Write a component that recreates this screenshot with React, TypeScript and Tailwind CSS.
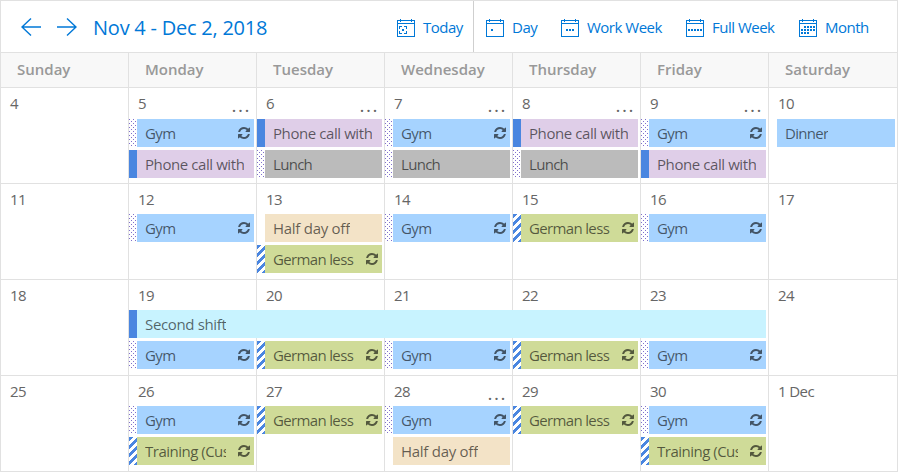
import type { ReactNode } from "react";

type Marker = "dots" | "solid" | "stripes" | "none";
type Entry = { title: string; marker: Marker; color: string; repeat?: boolean; span?: boolean; tracking?: string };
type Day = { label: string; more?: boolean; entries?: (Entry | null)[] };

const gym: Entry = { title: "Gym", marker: "dots", color: "bg-[#a6d3ff]", repeat: true, tracking: "tracking-[-0.6px]" };
const call: Entry = { title: "Phone call with", marker: "solid", color: "bg-[#dfcee8]", tracking: "tracking-[-0.42px]" };
const lunch: Entry = { title: "Lunch", marker: "dots", color: "bg-[#bbbbbb]", tracking: "tracking-[-0.7px]" };
const german: Entry = { title: "German less", marker: "stripes", color: "bg-[#cfdb98]", repeat: true, tracking: "tracking-[-0.65px]" };
const half: Entry = { title: "Half day off", marker: "none", color: "bg-[#f3e3c7]", tracking: "tracking-[-0.27px]" };
const training: Entry = { title: "Training (Custom)", marker: "stripes", color: "bg-[#cfdb98]", repeat: true, tracking: "tracking-[-0.5px]" };
const dinner: Entry = { title: "Dinner", marker: "none", color: "bg-[#a6d3ff]", tracking: "tracking-[-0.7px]" };
const shift: Entry = { title: "Second shift", marker: "solid", color: "bg-[#c8f3ff]", span: true, tracking: "tracking-[-0.35px]" };

const weeks: Day[][] = [
  [
    { label: "4" },
    { label: "5", more: true, entries: [gym, call] },
    { label: "6", more: true, entries: [call, lunch] },
    { label: "7", more: true, entries: [gym, lunch] },
    { label: "8", more: true, entries: [call, lunch] },
    { label: "9", more: true, entries: [gym, call] },
    { label: "10", entries: [dinner] },
  ],
  [
    { label: "11" },
    { label: "12", entries: [gym] },
    { label: "13", entries: [half, german] },
    { label: "14", entries: [gym] },
    { label: "15", entries: [german] },
    { label: "16", entries: [gym] },
    { label: "17" },
  ],
  [
    { label: "18" },
    { label: "19", entries: [shift, gym] },
    { label: "20", entries: [null, german] },
    { label: "21", entries: [null, gym] },
    { label: "22", entries: [null, german] },
    { label: "23", entries: [null, gym] },
    { label: "24" },
  ],
  [
    { label: "25" },
    { label: "26", entries: [gym, training] },
    { label: "27", entries: [german] },
    { label: "28", more: true, entries: [gym, half] },
    { label: "29", entries: [german] },
    { label: "30", entries: [gym, training] },
    { label: "1 Dec" },
  ],
];

const markers: Record<Marker, string> = {
  dots: "bg-[conic-gradient(from_270deg_at_1px_1px,#8070cc_90deg,transparent_0),conic-gradient(from_270deg_at_1px_1px,#8070cc_90deg,transparent_0)] bg-[length:4px_4px] bg-[position:0_0,2px_2px]",
  solid: "bg-[#4a86e0]",
  stripes: "bg-[repeating-linear-gradient(135deg,#4a86e0_0px,#4a86e0_3px,#ffffff_3px,#ffffff_5.657px)]",
  none: "",
};

function RepeatIcon() {
  return (
    <svg className="ml-3 shrink-0" width="12" height="12" viewBox="0 128 1536 1536" fill="currentColor">
      <path d="M1511 1056q0 5-1 7-64 268-268 434.500t-478 166.500q-146 0-282.500-55t-243.500-157l-129 129q-19 19-45 19t-45-19-19-45v-448q0-26 19-45t45-19h448q26 0 45 19t19 45-19 45l-137 137q71 66 161 102t187 36q134 0 250-65t186-179q11-17 53-117 8-23 30-23h192q13 0 22.500 9.500t9.500 22.500zM1536 256v448q0 26-19 45t-45 19h-448q-26 0-45-19t-19-45 19-45l138-138q-148-137-349-137-134 0-250 65t-186 179q-11 17-53 117-8 23-30 23h-199q-13 0-22.500-9.500t-9.500-22.500v-7q65-268 270-434.500t480-166.500q146 0 284 55.500t245 156.500l130-129q19-19 45-19t45 19 19 45z" />
    </svg>
  );
}

function EventBar({ entry, last }: { entry: Entry; last: boolean }) {
  const width = entry.span ? "w-[637px] relative z-10" : last ? "w-[126px]" : "w-[125px]";
  return (
    <div className={`flex h-7 ${width}`}>
      <div className={`w-2 shrink-0 ${markers[entry.marker]}`} />
      <div className={`flex min-w-0 flex-1 items-center pl-2 text-black/60 ${entry.color}`}>
        <span className={`overflow-hidden whitespace-nowrap text-[15px] leading-7 ${entry.repeat ? "w-[81px]" : ""} ${entry.tracking}`}>
          {entry.title}
        </span>
        {entry.repeat && <RepeatIcon />}
      </div>
    </div>
  );
}

function CalendarIcon({ children }: { children: ReactNode }) {
  return (
    <svg width="18" height="18" viewBox="0 0 18 18" fill="none" stroke="#0078d7" shapeRendering="crispEdges">
      <path d="M.5 1.5h17v16H.5zM0 4.5h18M3.5 0v3M14.5 0v3" />
      {children}
    </svg>
  );
}

function Tool({ label, className, children }: { label: string; className: string; children: ReactNode }) {
  return (
    <button className={`flex items-center gap-2 ${className}`}>
      <CalendarIcon>{children}</CalendarIcon>
      <span className="-mt-0.5 whitespace-nowrap text-[15px] leading-5 tracking-[-0.5px]">{label}</span>
    </button>
  );
}

export default function App() {
  return (
    <div className="h-[472px] w-[898px] overflow-hidden border border-[#e1e1e1] bg-white font-['Open_Sans','Noto_Sans',sans-serif] text-[#666]">
      <header className="flex h-[52px] border-b border-[#e1e1e1] text-[#0078d7]">
        <div className="flex w-[396px] items-center pl-5">
          <svg width="20" height="18" viewBox="0 0 20 18" fill="none" stroke="currentColor" strokeWidth="1.4">
            <path d="M10 .5 1 9l9 8.500M1 9h19" />
          </svg>
          <svg className="ml-4" width="20" height="18" viewBox="0 0 20 18" fill="none" stroke="currentColor" strokeWidth="1.4">
            <path d="M10 .5 19 9l-9 8.500M19 9H0" />
          </svg>
          <h1 className="ml-4 whitespace-nowrap pt-0.5 text-[20px] tracking-[-0.23px]">Nov 4 - Dec 2, 2018</h1>
        </div>
        <div className="flex w-[77px] items-center border-r border-[#cfcfcf] pt-[3px]">
          <Tool label="Today" className="">
            <path d="M2.500 10V7.500H5M7 7.500h2.500V10M9.500 12v2.500H7M5 14.500H2.500V12" />
            <path d="M5 11h2" strokeWidth="2" />
          </Tool>
        </div>
        <nav className="flex items-center pt-[3px]">
          <Tool label="Day" className="w-[75px] pl-3"><path d="M5 11h2" strokeWidth="2" /></Tool>
          <Tool label="Work Week" className="w-[125px] pl-3"><path d="M5 11h8" strokeWidth="2" strokeDasharray="2 1" /></Tool>
          <Tool label="Full Week" className="w-[113px] pl-3"><path d="M2 11h14" strokeWidth="2" strokeDasharray="2 1" /></Tool>
          <Tool label="Month" className="w-[100px] pl-3">
            <path d="M5 8h11M2 11h14M2 14h8" strokeWidth="2" strokeDasharray="2 1" />
          </Tool>
        </nav>
      </header>
      <div className="grid h-[35px] grid-cols-7 border-b border-[#e1e1e1] bg-[#f8f8f8] text-[15px] font-semibold text-[#999]">
        {["Sunday", "Monday", "Tuesday", "Wednesday", "Thursday", "Friday", "Saturday"].map((day) => (
          <div key={day} className="flex items-center border-r border-[#e1e1e1] pb-0.5 pl-4 last:border-r-0">{day}</div>
        ))}
      </div>
      {weeks.map((week, row) => (
        <div key={row} className="grid h-24 grid-cols-7 border-b border-[#e1e1e1]">
          {week.map((day, col) => (
            <div key={day.label} className="min-w-0 border-r border-[#e1e1e1] last:border-r-0">
              <div className={`flex justify-between pl-[9px] pr-[5px] text-[15px] leading-[30px] tracking-[-0.6px] ${row === 0 ? "h-[31px]" : "h-[30px]"}`}>
                <span>{day.label}</span>
                {day.more && <span className="pt-0.5 text-[19px] tracking-[1.5px]">...</span>}
              </div>
              <div className="flex flex-col gap-[3px]">
                {day.entries?.map((entry, i) =>
                  entry ? <EventBar key={i} entry={entry} last={col === 6} /> : <div key={i} className="h-7" />
                )}
              </div>
            </div>
          ))}
        </div>
      ))}
    </div>
  );
}
